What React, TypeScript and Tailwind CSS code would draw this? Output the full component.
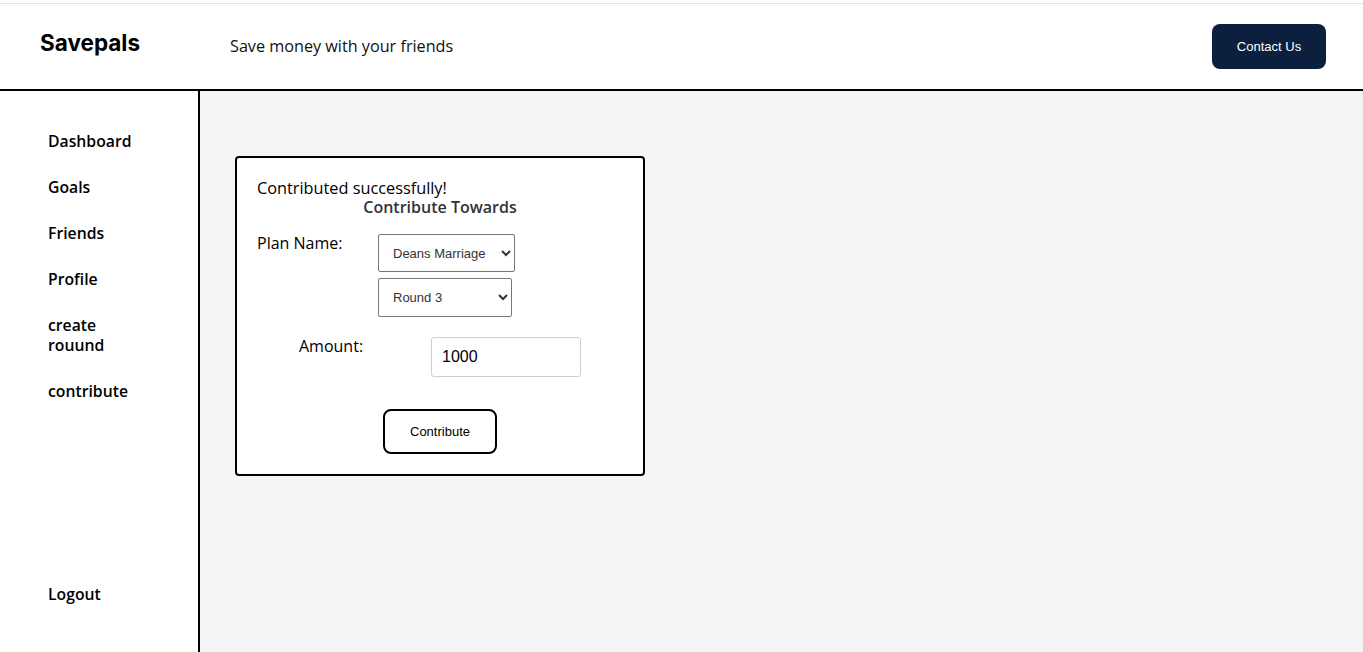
import { useState } from "react";

const NAV_ITEMS = ["Dashboard", "Goals", "Friends", "Profile", "create rouund", "contribute"];

const bodyFont = { fontFamily: '"Open Sans", sans-serif' };
const arial = { fontFamily: '"Liberation Sans", Arial, sans-serif' };

export default function App() {
  const [plan, setPlan] = useState("Deans Marriage");
  const [round, setRound] = useState("Round 3");
  const [amount, setAmount] = useState("1000");

  return (
    <div className="h-screen flex flex-col bg-white text-black overflow-hidden" style={bodyFont}>
      {/* HEADER */}
      <header className="shrink-0 h-[91px] border-b-2 border-black flex flex-col">
        <div className="h-[3px]" />
        <div className="h-px bg-[#e3e3e3]" />
        <div className="flex-1 flex items-center pl-10 pr-[37px]">
          <div
            className="w-[190px] text-[22.5px] font-bold -mt-2"
            style={{ fontFamily: "Inter, sans-serif" }}
          >
            Savepals
          </div>
          <div className="text-[16.2px] text-[#111]">Save money with your friends</div>
          <button className="ml-auto w-[114px] h-[45px] rounded-lg bg-[#0b1f3f] text-white text-[13px]" style={arial}>
            Contact Us
          </button>
        </div>
      </header>

      <div className="flex-1 flex min-h-0">
        {/* SIDEBAR */}
        <aside className="w-[200px] shrink-0 border-r-2 border-black flex flex-col pl-12 pt-[40px] pb-[48px]">
          <nav className="flex flex-col gap-[26px]">
            {NAV_ITEMS.map((item) => (
              <a key={item} className="w-[90px] text-[15.75px] font-semibold leading-5 cursor-pointer">
                {item}
              </a>
            ))}
          </nav>
          <a className="mt-auto text-[15.75px] font-semibold leading-5 cursor-pointer">Logout</a>
        </aside>

        {/* MAIN */}
        <main className="flex-1 bg-[#f4f5f7] pl-[35px] pt-[65px]">
          <div className="w-[410px] h-[320px] bg-white border-2 border-black rounded-[4px] px-5 pt-5">
            <p className="text-[16.3px] leading-5">Contributed successfully!</p>
            <h2 className="text-center text-[16px] font-semibold leading-5 text-[#333] -mt-px">
              Contribute Towards
            </h2>

            <div className="flex mt-[17px]">
              <label className="w-[121px] text-[16px] leading-5 -mt-px">Plan Name:</label>
              <div className="flex flex-col gap-[6px] text-[13px] text-[#333]" style={arial}>
                <select
                  value={plan}
                  onChange={(e) => setPlan(e.target.value)}
                  className="w-[137px] h-[38px] border border-[#767676] rounded-[2px] pl-[10px] pr-1 bg-white"
                >
                  <option>Deans Marriage</option>
                  <option>Trip Fund</option>
                </select>
                <select
                  value={round}
                  onChange={(e) => setRound(e.target.value)}
                  className="w-[134px] h-[39px] border border-[#767676] rounded-[2px] pl-[10px] pr-1 bg-white"
                >
                  <option>Round 1</option>
                  <option>Round 2</option>
                  <option>Round 3</option>
                </select>
              </div>
            </div>

            <div className="flex mt-[20px]">
              <label className="w-[174px] pl-[42px] text-[16px] leading-5 -mt-px">Amount:</label>
              <input
                value={amount}
                onChange={(e) => setAmount(e.target.value)}
                className="w-[150px] h-[40px] border border-[#cfcfcf] rounded-[3px] px-[10px] text-[16px] bg-white outline-none"
                style={arial}
              />
            </div>

            <div className="flex justify-center mt-8">
              <button className="w-[114px] h-[45px] border-2 border-black rounded-lg text-[13px] bg-white" style={arial}>
                Contribute
              </button>
            </div>
          </div>
        </main>
      </div>
    </div>
  );
}
